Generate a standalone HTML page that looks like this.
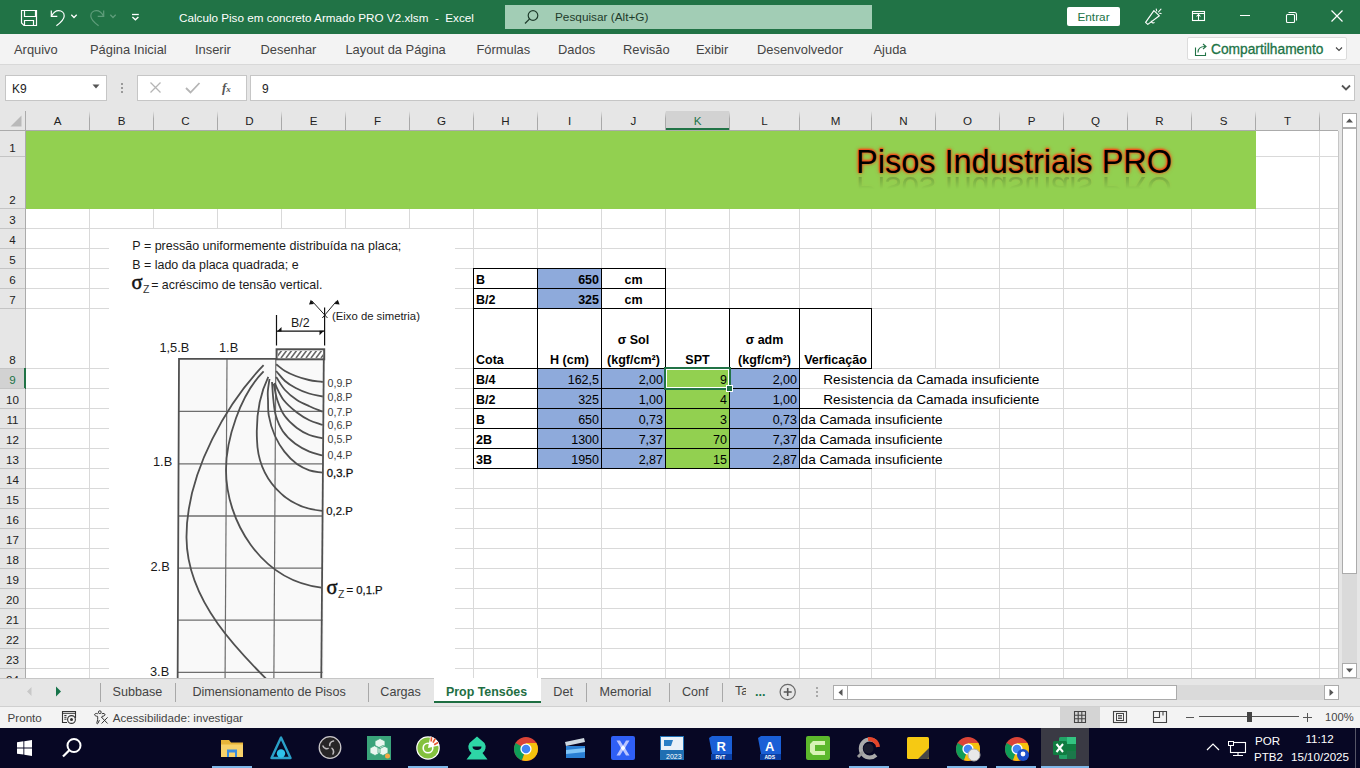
<!DOCTYPE html><html><head><meta charset="utf-8"><style>
html,body{margin:0;padding:0;width:1360px;height:768px;overflow:hidden;background:#fff;font-family:"Liberation Sans", sans-serif}
.r{position:absolute;display:block}
.t{position:absolute;white-space:pre;line-height:normal;font-family:"Liberation Sans", sans-serif}
</style></head><body>
<div class="r" style="left:0px;top:0px;width:1360px;height:34px;background:#217346;"></div>
<svg class="r" style="left:0px;top:0px;" width="150" height="34" viewBox="0 0 150 34"><path d="M21.5 10.5h15v15h-12.5l-2.5-2.5z" fill="none" stroke="#fff" stroke-width="1.2"/><path d="M24.5 10.5v6h11v-6" fill="none" stroke="#fff" stroke-width="1.2"/><path d="M24.5 25.5v-5h9v5" fill="none" stroke="#fff" stroke-width="1.2"/><path d="M51.3 10.6v5.8h6" fill="none" stroke="#fff" stroke-width="1.2"/><path d="M51.6 16c1.8-3.5 4.2-5.3 7-5.3 3.3 0 5.6 2.3 5.6 5.2 0 2.8-2.2 5.6-7.8 9.9" fill="none" stroke="#fff" stroke-width="1.2"/><path d="M71.3 14.8l2.7 2.7 2.7-2.7" fill="none" stroke="#fff" stroke-width="1.3"/><path d="M103.7 10.6v5.8h-6" fill="none" stroke="#5f9d7b" stroke-width="1.2"/><path d="M103.4 16c-1.8-3.5-4.2-5.3-7-5.3-3.3 0-5.6 2.3-5.6 5.2 0 2.8 2.2 5.6 7.8 9.9" fill="none" stroke="#5f9d7b" stroke-width="1.2"/><path d="M110.3 14.8l2.7 2.7 2.7-2.7" fill="none" stroke="#5f9d7b" stroke-width="1.3"/><path d="M132 14.5h6.8" stroke="#fff" stroke-width="1.3"/><path d="M132.4 17l3 2.8 3-2.8" fill="none" stroke="#fff" stroke-width="1.4"/></svg>
<div class="t" style="left:179px;top:11.41px;font-size:11.7px;color:#fff;font-weight:400;">Calculo Piso em concreto Armado PRO V2.xlsm&nbsp; -&nbsp; Excel</div>
<div class="r" style="left:505px;top:5px;width:367px;height:24px;background:#a2cdb5;"></div>
<svg class="r" style="left:522px;top:8px;" width="20" height="18" viewBox="0 0 20 18"><circle cx="11" cy="7.5" r="4.8" fill="none" stroke="#1e3b2b" stroke-width="1.2"/><path d="M7.6 10.9l-4.6 4.6" stroke="#1e3b2b" stroke-width="1.3"/></svg>
<div class="t" style="left:555px;top:10.32px;font-size:11.8px;color:#1e3b2b;font-weight:400;">Pesquisar (Alt+G)</div>
<div class="r" style="left:1067px;top:7px;width:53px;height:19px;background:#fff;border-radius:2px"></div>
<div class="t" style="left:1063.50px;width:60px;text-align:center;top:9.52px;font-size:11.8px;color:#217346;font-weight:400;">Entrar</div>
<svg class="r" style="left:1130px;top:0px;" width="90" height="34" viewBox="0 0 90 34"><path d="M1145.6 22.4L1153.9 10.6 1159.4 15.8 1147.8 24.4z" transform="translate(-1130 0)" fill="none" stroke="#fff" stroke-width="1.15" stroke-linejoin="round"/><path d="M1151.3 20.8a1.9 1.9 0 0 0 3.2 1.6" transform="translate(-1130 0)" fill="none" stroke="#fff" stroke-width="1.1"/><path d="M1156.2 9l.5 1.9M1161 9.1l-2.6 2.9M1159.6 13.3l1.5.3" transform="translate(-1130 0)" stroke="#fff" stroke-width="1.05" stroke-linecap="round"/><rect x="1192.5" y="11.5" width="12" height="9" transform="translate(-1130 0)" fill="none" stroke="#fff" stroke-width="1.1"/><path d="M1192.5 13.5h12M1198.5 14v6.5M1196.5 16.5l2-2 2 2" transform="translate(-1130 0)" fill="none" stroke="#fff" stroke-width="1.05"/></svg>
<div class="r" style="left:1240px;top:15px;width:10px;height:1px;background:#fff;"></div>
<svg class="r" style="left:1283px;top:9px;" width="16" height="16" viewBox="0 0 16 16"><rect x="3.5" y="5.5" width="8" height="8" rx="1" fill="none" stroke="#fff" stroke-width="1.1"/><path d="M5.5 3.5h6a2 2 0 0 1 2 2v6" fill="none" stroke="#fff" stroke-width="1.1"/></svg>
<svg class="r" style="left:1330px;top:9px;" width="14" height="14" viewBox="0 0 14 14"><path d="M1.5 1.5l11 11M12.5 1.5l-11 11" stroke="#fff" stroke-width="1.2"/></svg>
<div class="r" style="left:0px;top:34px;width:1360px;height:30px;background:#f3f3f3;"></div>
<div class="r" style="left:0px;top:64px;width:1360px;height:1px;background:#d8d8d8;"></div>
<div class="t" style="left:14px;top:42.33px;font-size:12.9px;color:#444;font-weight:400;">Arquivo</div>
<div class="t" style="left:90px;top:42.33px;font-size:12.9px;color:#444;font-weight:400;">Página Inicial</div>
<div class="t" style="left:195px;top:42.33px;font-size:12.9px;color:#444;font-weight:400;">Inserir</div>
<div class="t" style="left:260.5px;top:42.33px;font-size:12.9px;color:#444;font-weight:400;">Desenhar</div>
<div class="t" style="left:345.4px;top:42.33px;font-size:12.9px;color:#444;font-weight:400;">Layout da Página</div>
<div class="t" style="left:476.5px;top:42.33px;font-size:12.9px;color:#444;font-weight:400;">Fórmulas</div>
<div class="t" style="left:558px;top:42.33px;font-size:12.9px;color:#444;font-weight:400;">Dados</div>
<div class="t" style="left:623px;top:42.33px;font-size:12.9px;color:#444;font-weight:400;">Revisão</div>
<div class="t" style="left:696px;top:42.33px;font-size:12.9px;color:#444;font-weight:400;">Exibir</div>
<div class="t" style="left:757px;top:42.33px;font-size:12.9px;color:#444;font-weight:400;">Desenvolvedor</div>
<div class="t" style="left:873.5px;top:42.33px;font-size:12.9px;color:#444;font-weight:400;">Ajuda</div>
<div class="r" style="left:1187px;top:37px;width:160px;height:23px;background:#fff;box-sizing:border-box;border:1px solid #dcdcdc;border-radius:2px"></div>
<svg class="r" style="left:1193px;top:41px;" width="16" height="16" viewBox="0 0 16 16"><path d="M2.5 6.5v8h10v-3" fill="none" stroke="#217346" stroke-width="1.1"/><path d="M5 11.5c0-4 3-6 7-6" fill="none" stroke="#217346" stroke-width="1.1"/><path d="M10 3l3 2.5-3 2.5" fill="none" stroke="#217346" stroke-width="1.1"/></svg>
<div class="t" style="left:1211px;top:41.96px;font-size:13.75px;color:#217346;font-weight:400;-webkit-text-stroke:0.3px #217346">Compartilhamento</div>
<svg class="r" style="left:1334px;top:45px;" width="10" height="8" viewBox="0 0 10 8"><path d="M2 2.5l3 3 3-3" fill="none" stroke="#444" stroke-width="1.1"/></svg>
<div class="r" style="left:0px;top:65px;width:1360px;height:46px;background:#e6e6e6;"></div>
<div class="r" style="left:5px;top:75px;width:102px;height:26px;background:#fff;box-sizing:border-box;border:1px solid #c6c6c6"></div>
<div class="t" style="left:12px;top:81.54px;font-size:12px;color:#222;font-weight:400;">K9</div>
<svg class="r" style="left:91px;top:83px;" width="10" height="8" viewBox="0 0 10 8"><path d="M1.5 1.5h7l-3.5 4z" fill="#555"/></svg>
<div class="r" style="left:121px;top:83px;width:2px;height:2px;background:#9a9a9a;"></div>
<div class="r" style="left:121px;top:87px;width:2px;height:2px;background:#9a9a9a;"></div>
<div class="r" style="left:121px;top:91px;width:2px;height:2px;background:#9a9a9a;"></div>
<div class="r" style="left:137px;top:75px;width:110px;height:26px;background:#fff;box-sizing:border-box;border:1px solid #c6c6c6"></div>
<svg class="r" style="left:148px;top:81px;" width="16" height="14" viewBox="0 0 16 14"><path d="M2.5 1.5l10 10M12.5 1.5l-10 10" stroke="#b5b5b5" stroke-width="1.3"/></svg>
<svg class="r" style="left:184px;top:81px;" width="18" height="14" viewBox="0 0 18 14"><path d="M2 7l4.5 4.5 9-9.5" fill="none" stroke="#b5b5b5" stroke-width="1.8"/></svg>
<div class="t" style="left:222px;top:80.23px;font-size:13px;color:#555;font-weight:700;font-family:'Liberation Serif',serif"><i>f</i><span style='font-size:9px'><i>x</i></span></div>
<div class="r" style="left:250px;top:75px;width:1105px;height:26px;background:#fff;box-sizing:border-box;border:1px solid #c6c6c6"></div>
<div class="t" style="left:262px;top:81.54px;font-size:12px;color:#222;font-weight:400;">9</div>
<svg class="r" style="left:1340px;top:83px;" width="12" height="10" viewBox="0 0 12 10"><path d="M2 2.5l4 4 4-4" fill="none" stroke="#555" stroke-width="1.8"/></svg>
<div class="r" style="left:26px;top:131px;width:1313px;height:547px;background:#fff;"></div>
<div class="r" style="left:0px;top:111px;width:1339px;height:20px;background:#e6e6e6;"></div>
<div class="r" style="left:0px;top:130px;width:1339px;height:1px;background:#ababab;"></div>
<svg class="r" style="left:9px;top:114px;" width="14" height="14" viewBox="0 0 14 14"><path d="M12.5 1.5v11h-11z" fill="#b9b9b9"/></svg>
<svg class="r" style="left:0;top:0" width="1360" height="768"><rect x="89" y="131" width="1" height="547" fill="#d9d9d9"/><rect x="153" y="131" width="1" height="547" fill="#d9d9d9"/><rect x="217" y="131" width="1" height="547" fill="#d9d9d9"/><rect x="281" y="131" width="1" height="547" fill="#d9d9d9"/><rect x="345" y="131" width="1" height="547" fill="#d9d9d9"/><rect x="409" y="131" width="1" height="547" fill="#d9d9d9"/><rect x="473" y="131" width="1" height="547" fill="#d9d9d9"/><rect x="537" y="131" width="1" height="547" fill="#d9d9d9"/><rect x="601" y="131" width="1" height="547" fill="#d9d9d9"/><rect x="665" y="131" width="1" height="547" fill="#d9d9d9"/><rect x="729" y="131" width="1" height="547" fill="#d9d9d9"/><rect x="799" y="131" width="1" height="547" fill="#d9d9d9"/><rect x="871" y="131" width="1" height="547" fill="#d9d9d9"/><rect x="935" y="131" width="1" height="547" fill="#d9d9d9"/><rect x="999" y="131" width="1" height="547" fill="#d9d9d9"/><rect x="1063" y="131" width="1" height="547" fill="#d9d9d9"/><rect x="1127" y="131" width="1" height="547" fill="#d9d9d9"/><rect x="1191" y="131" width="1" height="547" fill="#d9d9d9"/><rect x="1255" y="131" width="1" height="547" fill="#d9d9d9"/><rect x="1319" y="131" width="1" height="547" fill="#d9d9d9"/><rect x="26" y="156" width="1313" height="1" fill="#d9d9d9"/><rect x="26" y="208" width="1313" height="1" fill="#d9d9d9"/><rect x="26" y="228" width="1313" height="1" fill="#d9d9d9"/><rect x="26" y="248" width="1313" height="1" fill="#d9d9d9"/><rect x="26" y="268" width="1313" height="1" fill="#d9d9d9"/><rect x="26" y="288" width="1313" height="1" fill="#d9d9d9"/><rect x="26" y="308" width="1313" height="1" fill="#d9d9d9"/><rect x="26" y="368" width="1313" height="1" fill="#d9d9d9"/><rect x="26" y="388" width="1313" height="1" fill="#d9d9d9"/><rect x="26" y="408" width="1313" height="1" fill="#d9d9d9"/><rect x="26" y="428" width="1313" height="1" fill="#d9d9d9"/><rect x="26" y="448" width="1313" height="1" fill="#d9d9d9"/><rect x="26" y="468" width="1313" height="1" fill="#d9d9d9"/><rect x="26" y="488" width="1313" height="1" fill="#d9d9d9"/><rect x="26" y="508" width="1313" height="1" fill="#d9d9d9"/><rect x="26" y="528" width="1313" height="1" fill="#d9d9d9"/><rect x="26" y="548" width="1313" height="1" fill="#d9d9d9"/><rect x="26" y="568" width="1313" height="1" fill="#d9d9d9"/><rect x="26" y="588" width="1313" height="1" fill="#d9d9d9"/><rect x="26" y="608" width="1313" height="1" fill="#d9d9d9"/><rect x="26" y="628" width="1313" height="1" fill="#d9d9d9"/><rect x="26" y="648" width="1313" height="1" fill="#d9d9d9"/><rect x="26" y="668" width="1313" height="1" fill="#d9d9d9"/></svg>
<div class="t" style="left:-142.50px;width:400px;text-align:center;top:114.10px;font-size:11.6px;color:#222;font-weight:400;">A</div>
<div class="t" style="left:-78.50px;width:400px;text-align:center;top:114.10px;font-size:11.6px;color:#222;font-weight:400;">B</div>
<div class="t" style="left:-14.50px;width:400px;text-align:center;top:114.10px;font-size:11.6px;color:#222;font-weight:400;">C</div>
<div class="t" style="left:49.50px;width:400px;text-align:center;top:114.10px;font-size:11.6px;color:#222;font-weight:400;">D</div>
<div class="t" style="left:113.50px;width:400px;text-align:center;top:114.10px;font-size:11.6px;color:#222;font-weight:400;">E</div>
<div class="t" style="left:177.50px;width:400px;text-align:center;top:114.10px;font-size:11.6px;color:#222;font-weight:400;">F</div>
<div class="t" style="left:241.50px;width:400px;text-align:center;top:114.10px;font-size:11.6px;color:#222;font-weight:400;">G</div>
<div class="t" style="left:305.50px;width:400px;text-align:center;top:114.10px;font-size:11.6px;color:#222;font-weight:400;">H</div>
<div class="t" style="left:369.50px;width:400px;text-align:center;top:114.10px;font-size:11.6px;color:#222;font-weight:400;">I</div>
<div class="t" style="left:433.50px;width:400px;text-align:center;top:114.10px;font-size:11.6px;color:#222;font-weight:400;">J</div>
<div class="r" style="left:666px;top:111px;width:63px;height:19px;background:#d2d2d2;"></div>
<div class="r" style="left:665px;top:128px;width:65px;height:2px;background:#217346;"></div>
<div class="t" style="left:497.50px;width:400px;text-align:center;top:114.10px;font-size:11.6px;color:#217346;font-weight:400;">K</div>
<div class="t" style="left:564.50px;width:400px;text-align:center;top:114.10px;font-size:11.6px;color:#222;font-weight:400;">L</div>
<div class="t" style="left:635.50px;width:400px;text-align:center;top:114.10px;font-size:11.6px;color:#222;font-weight:400;">M</div>
<div class="t" style="left:703.50px;width:400px;text-align:center;top:114.10px;font-size:11.6px;color:#222;font-weight:400;">N</div>
<div class="t" style="left:767.50px;width:400px;text-align:center;top:114.10px;font-size:11.6px;color:#222;font-weight:400;">O</div>
<div class="t" style="left:831.50px;width:400px;text-align:center;top:114.10px;font-size:11.6px;color:#222;font-weight:400;">P</div>
<div class="t" style="left:895.50px;width:400px;text-align:center;top:114.10px;font-size:11.6px;color:#222;font-weight:400;">Q</div>
<div class="t" style="left:959.50px;width:400px;text-align:center;top:114.10px;font-size:11.6px;color:#222;font-weight:400;">R</div>
<div class="t" style="left:1023.50px;width:400px;text-align:center;top:114.10px;font-size:11.6px;color:#222;font-weight:400;">S</div>
<div class="t" style="left:1087.50px;width:400px;text-align:center;top:114.10px;font-size:11.6px;color:#222;font-weight:400;">T</div>
<div class="r" style="left:25px;top:111px;width:1px;height:19px;background:linear-gradient(#e6e6e6,#a9a9a9 40%,#a9a9a9)"></div>
<div class="r" style="left:89px;top:111px;width:1px;height:19px;background:linear-gradient(#e6e6e6,#a9a9a9 40%,#a9a9a9)"></div>
<div class="r" style="left:153px;top:111px;width:1px;height:19px;background:linear-gradient(#e6e6e6,#a9a9a9 40%,#a9a9a9)"></div>
<div class="r" style="left:217px;top:111px;width:1px;height:19px;background:linear-gradient(#e6e6e6,#a9a9a9 40%,#a9a9a9)"></div>
<div class="r" style="left:281px;top:111px;width:1px;height:19px;background:linear-gradient(#e6e6e6,#a9a9a9 40%,#a9a9a9)"></div>
<div class="r" style="left:345px;top:111px;width:1px;height:19px;background:linear-gradient(#e6e6e6,#a9a9a9 40%,#a9a9a9)"></div>
<div class="r" style="left:409px;top:111px;width:1px;height:19px;background:linear-gradient(#e6e6e6,#a9a9a9 40%,#a9a9a9)"></div>
<div class="r" style="left:473px;top:111px;width:1px;height:19px;background:linear-gradient(#e6e6e6,#a9a9a9 40%,#a9a9a9)"></div>
<div class="r" style="left:537px;top:111px;width:1px;height:19px;background:linear-gradient(#e6e6e6,#a9a9a9 40%,#a9a9a9)"></div>
<div class="r" style="left:601px;top:111px;width:1px;height:19px;background:linear-gradient(#e6e6e6,#a9a9a9 40%,#a9a9a9)"></div>
<div class="r" style="left:665px;top:111px;width:1px;height:19px;background:linear-gradient(#e6e6e6,#a9a9a9 40%,#a9a9a9)"></div>
<div class="r" style="left:729px;top:111px;width:1px;height:19px;background:linear-gradient(#e6e6e6,#a9a9a9 40%,#a9a9a9)"></div>
<div class="r" style="left:799px;top:111px;width:1px;height:19px;background:linear-gradient(#e6e6e6,#a9a9a9 40%,#a9a9a9)"></div>
<div class="r" style="left:871px;top:111px;width:1px;height:19px;background:linear-gradient(#e6e6e6,#a9a9a9 40%,#a9a9a9)"></div>
<div class="r" style="left:935px;top:111px;width:1px;height:19px;background:linear-gradient(#e6e6e6,#a9a9a9 40%,#a9a9a9)"></div>
<div class="r" style="left:999px;top:111px;width:1px;height:19px;background:linear-gradient(#e6e6e6,#a9a9a9 40%,#a9a9a9)"></div>
<div class="r" style="left:1063px;top:111px;width:1px;height:19px;background:linear-gradient(#e6e6e6,#a9a9a9 40%,#a9a9a9)"></div>
<div class="r" style="left:1127px;top:111px;width:1px;height:19px;background:linear-gradient(#e6e6e6,#a9a9a9 40%,#a9a9a9)"></div>
<div class="r" style="left:1191px;top:111px;width:1px;height:19px;background:linear-gradient(#e6e6e6,#a9a9a9 40%,#a9a9a9)"></div>
<div class="r" style="left:1255px;top:111px;width:1px;height:19px;background:linear-gradient(#e6e6e6,#a9a9a9 40%,#a9a9a9)"></div>
<div class="r" style="left:1319px;top:111px;width:1px;height:19px;background:linear-gradient(#e6e6e6,#a9a9a9 40%,#a9a9a9)"></div>
<div class="r" style="left:1319px;top:111px;width:1px;height:19px;background:linear-gradient(#e6e6e6,#a9a9a9 40%,#a9a9a9)"></div>
<div class="r" style="left:0px;top:131px;width:25px;height:547px;background:#e6e6e6;"></div>
<div class="r" style="left:25px;top:111px;width:1px;height:567px;background:#ababab;"></div>
<div class="t" style="left:0.00px;width:25px;text-align:center;top:141.00px;font-size:11.6px;color:#222;font-weight:400;">1</div>
<div class="r" style="left:0px;top:156px;width:25px;height:1px;background:#c4c4c4;"></div>
<div class="t" style="left:0.00px;width:25px;text-align:center;top:193.00px;font-size:11.6px;color:#222;font-weight:400;">2</div>
<div class="r" style="left:0px;top:208px;width:25px;height:1px;background:#c4c4c4;"></div>
<div class="t" style="left:0.00px;width:25px;text-align:center;top:213.00px;font-size:11.6px;color:#222;font-weight:400;">3</div>
<div class="r" style="left:0px;top:228px;width:25px;height:1px;background:#c4c4c4;"></div>
<div class="t" style="left:0.00px;width:25px;text-align:center;top:233.00px;font-size:11.6px;color:#222;font-weight:400;">4</div>
<div class="r" style="left:0px;top:248px;width:25px;height:1px;background:#c4c4c4;"></div>
<div class="t" style="left:0.00px;width:25px;text-align:center;top:253.00px;font-size:11.6px;color:#222;font-weight:400;">5</div>
<div class="r" style="left:0px;top:268px;width:25px;height:1px;background:#c4c4c4;"></div>
<div class="t" style="left:0.00px;width:25px;text-align:center;top:273.00px;font-size:11.6px;color:#222;font-weight:400;">6</div>
<div class="r" style="left:0px;top:288px;width:25px;height:1px;background:#c4c4c4;"></div>
<div class="t" style="left:0.00px;width:25px;text-align:center;top:293.00px;font-size:11.6px;color:#222;font-weight:400;">7</div>
<div class="r" style="left:0px;top:308px;width:25px;height:1px;background:#c4c4c4;"></div>
<div class="t" style="left:0.00px;width:25px;text-align:center;top:353.00px;font-size:11.6px;color:#222;font-weight:400;">8</div>
<div class="r" style="left:0px;top:368px;width:25px;height:1px;background:#c4c4c4;"></div>
<div class="r" style="left:0px;top:369px;width:25px;height:19px;background:#d2d2d2;"></div>
<div class="r" style="left:24px;top:368px;width:2px;height:21px;background:#217346;"></div>
<div class="t" style="left:0.00px;width:25px;text-align:center;top:373.00px;font-size:11.6px;color:#217346;font-weight:400;">9</div>
<div class="r" style="left:0px;top:388px;width:25px;height:1px;background:#c4c4c4;"></div>
<div class="t" style="left:0.00px;width:25px;text-align:center;top:393.00px;font-size:11.6px;color:#222;font-weight:400;">10</div>
<div class="r" style="left:0px;top:408px;width:25px;height:1px;background:#c4c4c4;"></div>
<div class="t" style="left:0.00px;width:25px;text-align:center;top:413.00px;font-size:11.6px;color:#222;font-weight:400;">11</div>
<div class="r" style="left:0px;top:428px;width:25px;height:1px;background:#c4c4c4;"></div>
<div class="t" style="left:0.00px;width:25px;text-align:center;top:433.00px;font-size:11.6px;color:#222;font-weight:400;">12</div>
<div class="r" style="left:0px;top:448px;width:25px;height:1px;background:#c4c4c4;"></div>
<div class="t" style="left:0.00px;width:25px;text-align:center;top:453.00px;font-size:11.6px;color:#222;font-weight:400;">13</div>
<div class="r" style="left:0px;top:468px;width:25px;height:1px;background:#c4c4c4;"></div>
<div class="t" style="left:0.00px;width:25px;text-align:center;top:473.00px;font-size:11.6px;color:#222;font-weight:400;">14</div>
<div class="r" style="left:0px;top:488px;width:25px;height:1px;background:#c4c4c4;"></div>
<div class="t" style="left:0.00px;width:25px;text-align:center;top:493.00px;font-size:11.6px;color:#222;font-weight:400;">15</div>
<div class="r" style="left:0px;top:508px;width:25px;height:1px;background:#c4c4c4;"></div>
<div class="t" style="left:0.00px;width:25px;text-align:center;top:513.00px;font-size:11.6px;color:#222;font-weight:400;">16</div>
<div class="r" style="left:0px;top:528px;width:25px;height:1px;background:#c4c4c4;"></div>
<div class="t" style="left:0.00px;width:25px;text-align:center;top:533.00px;font-size:11.6px;color:#222;font-weight:400;">17</div>
<div class="r" style="left:0px;top:548px;width:25px;height:1px;background:#c4c4c4;"></div>
<div class="t" style="left:0.00px;width:25px;text-align:center;top:553.00px;font-size:11.6px;color:#222;font-weight:400;">18</div>
<div class="r" style="left:0px;top:568px;width:25px;height:1px;background:#c4c4c4;"></div>
<div class="t" style="left:0.00px;width:25px;text-align:center;top:573.00px;font-size:11.6px;color:#222;font-weight:400;">19</div>
<div class="r" style="left:0px;top:588px;width:25px;height:1px;background:#c4c4c4;"></div>
<div class="t" style="left:0.00px;width:25px;text-align:center;top:593.00px;font-size:11.6px;color:#222;font-weight:400;">20</div>
<div class="r" style="left:0px;top:608px;width:25px;height:1px;background:#c4c4c4;"></div>
<div class="t" style="left:0.00px;width:25px;text-align:center;top:613.00px;font-size:11.6px;color:#222;font-weight:400;">21</div>
<div class="r" style="left:0px;top:628px;width:25px;height:1px;background:#c4c4c4;"></div>
<div class="t" style="left:0.00px;width:25px;text-align:center;top:633.00px;font-size:11.6px;color:#222;font-weight:400;">22</div>
<div class="r" style="left:0px;top:648px;width:25px;height:1px;background:#c4c4c4;"></div>
<div class="t" style="left:0.00px;width:25px;text-align:center;top:653.00px;font-size:11.6px;color:#222;font-weight:400;">23</div>
<div class="r" style="left:0px;top:668px;width:25px;height:1px;background:#c4c4c4;"></div>
<div class="t" style="left:0.00px;width:25px;text-align:center;top:673.00px;font-size:11.6px;color:#222;font-weight:400;">24</div>
<div class="r" style="left:26px;top:131px;width:1230px;height:78px;background:#92d050;"></div>
<div class="t" style="left:856px;top:144.19px;font-size:32.5px;color:#000;text-shadow:0 -1px 1px #f0521c,0 0 2px #f0521c,0 -1px 3px #f0521c,0 0 4px rgba(240,82,28,.7)">Pisos Industriais PRO</div>
<div class="r" style="left:846px;top:175px;width:340px;height:14px;overflow:hidden;opacity:.22;-webkit-mask-image:linear-gradient(#000,rgba(0,0,0,0))"><div class="t" style="left:10px;top:-28.41px;font-size:32.5px;color:#000;transform:scaleY(-1);transform-origin:0 29.41px;text-shadow:0 0 3px #f0521c">Pisos Industriais PRO</div></div>
<div class="r" style="left:538px;top:269px;width:63px;height:39px;background:#8eaadb;"></div>
<div class="r" style="left:538px;top:369px;width:63px;height:99px;background:#8eaadb;"></div>
<div class="r" style="left:602px;top:369px;width:63px;height:99px;background:#8eaadb;"></div>
<div class="r" style="left:666px;top:369px;width:63px;height:99px;background:#92d050;"></div>
<div class="r" style="left:730px;top:369px;width:69px;height:99px;background:#8eaadb;"></div>
<div class="r" style="left:800px;top:369px;width:263px;height:39px;background:#fff;"></div>
<div class="r" style="left:800px;top:388px;width:263px;height:1px;background:#d9d9d9"></div>
<div class="r" style="left:800px;top:409px;width:136px;height:59px;background:#fff;"></div>
<div class="r" style="left:800px;top:428px;width:135px;height:1px;background:#d9d9d9"></div>
<div class="r" style="left:800px;top:448px;width:135px;height:1px;background:#d9d9d9"></div>
<div class="r" style="left:473px;top:268px;width:193px;height:1px;background:#000;"></div>
<div class="r" style="left:473px;top:288px;width:193px;height:1px;background:#000;"></div>
<div class="r" style="left:473px;top:308px;width:193px;height:1px;background:#000;"></div>
<div class="r" style="left:473px;top:268px;width:1px;height:41px;background:#000;"></div>
<div class="r" style="left:537px;top:268px;width:1px;height:41px;background:#000;"></div>
<div class="r" style="left:601px;top:268px;width:1px;height:41px;background:#000;"></div>
<div class="r" style="left:665px;top:268px;width:1px;height:41px;background:#000;"></div>
<div class="r" style="left:473px;top:308px;width:399px;height:1px;background:#000;"></div>
<div class="r" style="left:473px;top:368px;width:399px;height:1px;background:#000;"></div>
<div class="r" style="left:473px;top:308px;width:1px;height:61px;background:#000;"></div>
<div class="r" style="left:537px;top:308px;width:1px;height:61px;background:#000;"></div>
<div class="r" style="left:601px;top:308px;width:1px;height:61px;background:#000;"></div>
<div class="r" style="left:665px;top:308px;width:1px;height:61px;background:#000;"></div>
<div class="r" style="left:729px;top:308px;width:1px;height:61px;background:#000;"></div>
<div class="r" style="left:799px;top:308px;width:1px;height:61px;background:#000;"></div>
<div class="r" style="left:871px;top:308px;width:1px;height:61px;background:#000;"></div>
<div class="r" style="left:473px;top:388px;width:327px;height:1px;background:#000;"></div>
<div class="r" style="left:473px;top:408px;width:399px;height:1px;background:#000;"></div>
<div class="r" style="left:473px;top:428px;width:399px;height:1px;background:#000;"></div>
<div class="r" style="left:473px;top:448px;width:399px;height:1px;background:#000;"></div>
<div class="r" style="left:473px;top:468px;width:399px;height:1px;background:#000;"></div>
<div class="r" style="left:473px;top:368px;width:1px;height:101px;background:#000;"></div>
<div class="r" style="left:537px;top:368px;width:1px;height:101px;background:#000;"></div>
<div class="r" style="left:601px;top:368px;width:1px;height:101px;background:#000;"></div>
<div class="r" style="left:665px;top:368px;width:1px;height:101px;background:#000;"></div>
<div class="r" style="left:729px;top:368px;width:1px;height:101px;background:#000;"></div>
<div class="r" style="left:799px;top:368px;width:1px;height:101px;background:#000;"></div>
<div class="t" style="left:476px;top:272.69px;font-size:12.5px;color:#000;font-weight:700;">B</div>
<div class="t" style="left:399.00px;width:200px;text-align:right;top:272.69px;font-size:12.5px;color:#000;font-weight:700;">650</div>
<div class="t" style="left:533.50px;width:200px;text-align:center;top:272.69px;font-size:12.5px;color:#000;font-weight:700;">cm</div>
<div class="t" style="left:476px;top:292.69px;font-size:12.5px;color:#000;font-weight:700;">B/2</div>
<div class="t" style="left:399.00px;width:200px;text-align:right;top:292.69px;font-size:12.5px;color:#000;font-weight:700;">325</div>
<div class="t" style="left:533.50px;width:200px;text-align:center;top:292.69px;font-size:12.5px;color:#000;font-weight:700;">cm</div>
<div class="t" style="left:476px;top:352.69px;font-size:12.5px;color:#000;font-weight:700;">Cota</div>
<div class="t" style="left:469.50px;width:200px;text-align:center;top:352.69px;font-size:12.5px;color:#000;font-weight:700;">H (cm)</div>
<div class="t" style="left:533.50px;width:200px;text-align:center;top:332.69px;font-size:12.5px;color:#000;font-weight:700;">σ Sol</div>
<div class="t" style="left:533.50px;width:200px;text-align:center;top:352.69px;font-size:12.5px;color:#000;font-weight:700;">(kgf/cm²)</div>
<div class="t" style="left:597.50px;width:200px;text-align:center;top:352.69px;font-size:12.5px;color:#000;font-weight:700;">SPT</div>
<div class="t" style="left:664.50px;width:200px;text-align:center;top:332.69px;font-size:12.5px;color:#000;font-weight:700;">σ adm</div>
<div class="t" style="left:664.50px;width:200px;text-align:center;top:352.69px;font-size:12.5px;color:#000;font-weight:700;">(kgf/cm²)</div>
<div class="t" style="left:735.50px;width:200px;text-align:center;top:352.69px;font-size:12.5px;color:#000;font-weight:700;">Verficação</div>
<div class="t" style="left:476px;top:372.69px;font-size:12.5px;color:#000;font-weight:700;">B/4</div>
<div class="t" style="left:399.00px;width:200px;text-align:right;top:372.69px;font-size:12.5px;color:#000;font-weight:400;">162,5</div>
<div class="t" style="left:463.00px;width:200px;text-align:right;top:372.69px;font-size:12.5px;color:#000;font-weight:400;">2,00</div>
<div class="t" style="left:527.00px;width:200px;text-align:right;top:372.69px;font-size:12.5px;color:#000;font-weight:400;">9</div>
<div class="t" style="left:597.00px;width:200px;text-align:right;top:372.69px;font-size:12.5px;color:#000;font-weight:400;">2,00</div>
<div class="t" style="left:476px;top:392.69px;font-size:12.5px;color:#000;font-weight:700;">B/2</div>
<div class="t" style="left:399.00px;width:200px;text-align:right;top:392.69px;font-size:12.5px;color:#000;font-weight:400;">325</div>
<div class="t" style="left:463.00px;width:200px;text-align:right;top:392.69px;font-size:12.5px;color:#000;font-weight:400;">1,00</div>
<div class="t" style="left:527.00px;width:200px;text-align:right;top:392.69px;font-size:12.5px;color:#000;font-weight:400;">4</div>
<div class="t" style="left:597.00px;width:200px;text-align:right;top:392.69px;font-size:12.5px;color:#000;font-weight:400;">1,00</div>
<div class="t" style="left:476px;top:412.69px;font-size:12.5px;color:#000;font-weight:700;">B</div>
<div class="t" style="left:399.00px;width:200px;text-align:right;top:412.69px;font-size:12.5px;color:#000;font-weight:400;">650</div>
<div class="t" style="left:463.00px;width:200px;text-align:right;top:412.69px;font-size:12.5px;color:#000;font-weight:400;">0,73</div>
<div class="t" style="left:527.00px;width:200px;text-align:right;top:412.69px;font-size:12.5px;color:#000;font-weight:400;">3</div>
<div class="t" style="left:597.00px;width:200px;text-align:right;top:412.69px;font-size:12.5px;color:#000;font-weight:400;">0,73</div>
<div class="t" style="left:476px;top:432.69px;font-size:12.5px;color:#000;font-weight:700;">2B</div>
<div class="t" style="left:399.00px;width:200px;text-align:right;top:432.69px;font-size:12.5px;color:#000;font-weight:400;">1300</div>
<div class="t" style="left:463.00px;width:200px;text-align:right;top:432.69px;font-size:12.5px;color:#000;font-weight:400;">7,37</div>
<div class="t" style="left:527.00px;width:200px;text-align:right;top:432.69px;font-size:12.5px;color:#000;font-weight:400;">70</div>
<div class="t" style="left:597.00px;width:200px;text-align:right;top:432.69px;font-size:12.5px;color:#000;font-weight:400;">7,37</div>
<div class="t" style="left:476px;top:452.69px;font-size:12.5px;color:#000;font-weight:700;">3B</div>
<div class="t" style="left:399.00px;width:200px;text-align:right;top:452.69px;font-size:12.5px;color:#000;font-weight:400;">1950</div>
<div class="t" style="left:463.00px;width:200px;text-align:right;top:452.69px;font-size:12.5px;color:#000;font-weight:400;">2,87</div>
<div class="t" style="left:527.00px;width:200px;text-align:right;top:452.69px;font-size:12.5px;color:#000;font-weight:400;">15</div>
<div class="t" style="left:597.00px;width:200px;text-align:right;top:452.69px;font-size:12.5px;color:#000;font-weight:400;">2,87</div>
<div class="t" style="left:823.3px;top:371.69px;font-size:13.6px;color:#000;font-weight:400;">Resistencia da Camada insuficiente</div>
<div class="t" style="left:823.3px;top:391.69px;font-size:13.6px;color:#000;font-weight:400;">Resistencia da Camada insuficiente</div>
<div class="t" style="left:800px;top:411.69px;width:200px;height:20px;overflow:hidden;font-size:13.6px"><span style="position:absolute;left:0.6px">da Camada insuficiente</span></div>
<div class="t" style="left:800px;top:431.69px;width:200px;height:20px;overflow:hidden;font-size:13.6px"><span style="position:absolute;left:0.6px">da Camada insuficiente</span></div>
<div class="t" style="left:800px;top:451.69px;width:200px;height:20px;overflow:hidden;font-size:13.6px"><span style="position:absolute;left:0.6px">da Camada insuficiente</span></div>
<div class="r" style="left:664px;top:367px;width:67px;height:23px;box-sizing:border-box;border:2px solid #217346"></div>
<div class="r" style="left:666px;top:369px;width:63px;height:19px;box-sizing:border-box;border:1px solid #fff"></div>
<div class="r" style="left:726px;top:385px;width:7px;height:7px;background:#fff;"></div>
<div class="r" style="left:727px;top:386px;width:5px;height:5px;background:#217346;"></div>
<div class="r" style="left:109px;top:229px;width:346px;height:449px;background:#fff;"></div>
<svg class="r" style="left:109px;top:229px" width="346" height="449" viewBox="109 229 346 449"><rect x="179" y="359" width="145" height="330" fill="#f9f9f9"/><line x1="227" y1="359" x2="225" y2="690" stroke="#6e6e6e" stroke-width="1.2"/><line x1="275.8" y1="359" x2="273.8" y2="690" stroke="#6e6e6e" stroke-width="1.2"/><line x1="178" y1="411.3" x2="322.5" y2="411.3" stroke="#6e6e6e" stroke-width="1.3"/><line x1="178" y1="463.8" x2="322.5" y2="463.8" stroke="#6e6e6e" stroke-width="1.3"/><line x1="178" y1="516" x2="322.5" y2="516" stroke="#6e6e6e" stroke-width="1.3"/><line x1="178" y1="568.2" x2="322.5" y2="568.2" stroke="#6e6e6e" stroke-width="1.3"/><line x1="178" y1="620.2" x2="322.5" y2="620.2" stroke="#6e6e6e" stroke-width="1.3"/><line x1="178" y1="672.4" x2="322.5" y2="672.4" stroke="#6e6e6e" stroke-width="1.3"/><path d="M177.6 690L179 358.8H276" fill="none" stroke="#505050" stroke-width="1.8"/><line x1="323.8" y1="358" x2="321.2" y2="690" stroke="#505050" stroke-width="1.8"/><rect x="276.6" y="349.3" width="47.6" height="10" fill="#fff" stroke="#505050" stroke-width="2"/><clipPath id="pc"><rect x="278" y="351" width="45" height="7"/></clipPath><path d="M276 358 l6 -8M281 358 l6 -8M286 358 l6 -8M291 358 l6 -8M296 358 l6 -8M301 358 l6 -8M306 358 l6 -8M311 358 l6 -8M316 358 l6 -8M321 358 l6 -8" stroke="#6a6a6a" stroke-width="1.6" clip-path="url(#pc)"/><path d="M276.5 315V345.5M324.6 307.5V345.5M277 331.1H324" stroke="#111" stroke-width="1.2" fill="none"/><path d="M277 331.5l4.5-4.5v4.5z M324 330.8l-4.5 4.5v-4.5z" fill="#111"/><path d="M311.8 300.8L327.5 318M336.8 300.8L322.3 318" stroke="#222" stroke-width="1" fill="none"/><path d="M310.8 299.8l3.2 4.2 -5 .6z M337.8 299.8l-3.2 4.2 5 .6z" fill="#111"/><path d="M276.2 364.3 C279.1 366.5 281.8 369.1 285.0 371.0 C288.3 373.0 291.9 374.5 295.7 376.0 C299.8 377.6 304.5 379.0 309.0 380.0 C313.5 381.0 318.2 381.3 322.8 382.0" fill="none" stroke="#505050" stroke-width="1.8"/><path d="M276.2 371.0 C279.1 374.3 281.7 378.1 285.0 381.0 C288.2 383.8 291.8 386.0 295.7 388.0 C299.8 390.2 304.5 392.1 309.0 393.5 C313.5 394.9 318.2 395.5 322.8 396.5" fill="none" stroke="#505050" stroke-width="1.8"/><path d="M276.2 377.0 C279.1 381.3 281.5 386.2 285.0 390.0 C288.4 393.8 292.7 397.2 296.9 400.0 C300.9 402.6 305.1 404.3 309.4 406.2 C313.7 408.2 318.3 409.9 322.7 411.7" fill="none" stroke="#505050" stroke-width="1.8"/><path d="M274.5 383.0 C277.5 388.7 279.8 395.0 283.6 400.0 C287.3 404.8 292.4 409.0 296.9 412.5 C301.0 415.6 305.0 418.2 309.4 420.3 C313.7 422.4 318.3 423.4 322.7 425.0" fill="none" stroke="#505050" stroke-width="1.8"/><path d="M273.7 383.8 C274.9 389.2 275.5 394.7 277.3 400.0 C279.1 405.3 281.2 411.0 284.4 415.6 C287.7 420.3 292.5 424.7 296.9 428.0 C300.9 431.0 305.0 433.3 309.4 435.0 C313.7 436.7 318.3 437.2 322.7 438.3" fill="none" stroke="#505050" stroke-width="1.8"/><path d="M272.0 382.0 C272.5 388.0 272.7 394.2 273.4 400.0 C274.0 405.4 274.3 410.5 275.8 415.6 C277.4 420.9 279.6 426.6 282.8 431.2 C286.1 436.0 290.7 440.3 295.3 443.8 C299.6 447.0 304.7 449.6 309.4 451.6 C313.8 453.4 318.3 454.2 322.7 455.5" fill="none" stroke="#505050" stroke-width="1.8"/><path d="M269.5 379.0 C268.9 383.3 268.0 388.2 267.8 392.0 C267.6 395.0 267.9 396.9 268.0 400.0 C268.2 404.3 267.8 410.1 268.8 415.6 C269.9 422.0 272.2 429.8 275.0 436.0 C277.6 441.7 280.7 446.9 284.4 451.6 C288.0 456.2 292.5 460.8 296.9 464.0 C300.9 466.8 305.1 468.8 309.4 470.3 C313.7 471.7 318.3 471.9 322.7 472.7" fill="none" stroke="#505050" stroke-width="1.8"/><path d="M268.3 376.9 C258 398 256 420 257 440 C258 478 285 508 322 510.8" fill="none" stroke="#505050" stroke-width="1.8"/><path d="M263.6 371.4 C240 395 226 440 226 470 C226 520 260 580 321.3 587.6" fill="none" stroke="#505050" stroke-width="1.8"/><path d="M263.6 365.2 C230 400 186 470 186.5 538 C187 600 235 650 290 702" fill="none" stroke="#505050" stroke-width="1.8"/><text x="132.3" y="250" font-family="Liberation Sans" font-size="12.5" fill="#1a1a1a" >P = pressão uniformemente distribuída na placa;</text><text x="132.3" y="269" font-family="Liberation Sans" font-size="12.45" fill="#1a1a1a" >B = lado da placa quadrada; e</text><text x="131.6" y="288.8" font-family="Liberation Serif" font-size="20.5" fill="#111"  stroke="#111" stroke-width="0.5">σ</text><text x="143" y="292.5" font-family="Liberation Sans" font-size="10.5" fill="#333" >Z</text><text x="151.2" y="288.6" font-family="Liberation Sans" font-size="12.4" fill="#1a1a1a" >= acréscimo de tensão vertical.</text><text x="291" y="326.7" font-family="Liberation Sans" font-size="12.4" fill="#1a1a1a" >B/2</text><text x="332" y="319.5" font-family="Liberation Sans" font-size="11.3" fill="#1a1a1a" >(Eixo de simetria)</text><text x="159.4" y="352.3" font-family="Liberation Sans" font-size="12.8" fill="#1a1a1a" >1,5.B</text><text x="219" y="352.3" font-family="Liberation Sans" font-size="12.8" fill="#1a1a1a" >1.B</text><text x="153" y="466" font-family="Liberation Sans" font-size="12.8" fill="#1a1a1a" >1.B</text><text x="150.5" y="571" font-family="Liberation Sans" font-size="12.8" fill="#1a1a1a" >2.B</text><text x="150" y="675.5" font-family="Liberation Sans" font-size="12.8" fill="#1a1a1a" >3.B</text><text x="327.6" y="386.5" font-family="Liberation Sans" font-size="10.6" fill="#3a3a3a" >0,9.P</text><text x="327.6" y="401.3" font-family="Liberation Sans" font-size="10.6" fill="#3a3a3a" >0,8.P</text><text x="327.6" y="415.6" font-family="Liberation Sans" font-size="10.6" fill="#3a3a3a" >0,7.P</text><text x="327.6" y="429" font-family="Liberation Sans" font-size="10.6" fill="#3a3a3a" >0,6.P</text><text x="327.6" y="443.4" font-family="Liberation Sans" font-size="10.6" fill="#3a3a3a" >0,5.P</text><text x="327.6" y="459.4" font-family="Liberation Sans" font-size="10.6" fill="#3a3a3a" >0,4.P</text><text x="326.8" y="476.7" font-family="Liberation Sans" font-size="11.3" fill="#111" stroke="#111" stroke-width="0.3">0,3.P</text><text x="326.3" y="514.6" font-family="Liberation Sans" font-size="11.3" fill="#111" stroke="#111" stroke-width="0.2">0,2.P</text><text x="326.4" y="593.6" font-family="Liberation Serif" font-size="20.5" fill="#111"  stroke="#111" stroke-width="0.5">σ</text><text x="338" y="597.5" font-family="Liberation Sans" font-size="10.5" fill="#333" >Z</text><text x="346.5" y="593.7" font-family="Liberation Sans" font-size="11.3" fill="#111" stroke="#111" stroke-width="0.25">= 0,1.P</text></svg>
<div class="r" style="left:1338px;top:111px;width:22px;height:567px;background:#e6e6e6;"></div>
<div class="r" style="left:1338px;top:131px;width:1px;height:547px;background:#c6c6c6;"></div>
<div class="r" style="left:1342px;top:113px;width:15px;height:15px;background:#fff;box-sizing:border-box;border:1px solid #ababab"></div>
<svg class="r" style="left:1342px;top:113px;" width="15" height="15" viewBox="0 0 15 15"><path d="M4 9.5h7l-3.5-4z" fill="#555"/></svg>
<div class="r" style="left:1342px;top:128px;width:15px;height:446px;background:#fff;box-sizing:border-box;border:1px solid #ababab"></div>
<div class="r" style="left:1342px;top:574px;width:15px;height:89px;background:#dadada;"></div>
<div class="r" style="left:1342px;top:663px;width:15px;height:15px;background:#fff;box-sizing:border-box;border:1px solid #ababab"></div>
<svg class="r" style="left:1342px;top:663px;" width="15" height="15" viewBox="0 0 15 15"><path d="M4 5.5h7l-3.5 4z" fill="#555"/></svg>
<div class="r" style="left:0px;top:678px;width:1360px;height:28px;background:#e6e6e6;"></div>
<div class="r" style="left:0px;top:678px;width:434px;height:1px;background:#c6c6c6;"></div>
<div class="r" style="left:541px;top:678px;width:819px;height:1px;background:#c6c6c6;"></div>
<div class="r" style="left:0px;top:706px;width:1360px;height:1px;background:#d0d0d0;"></div>
<svg class="r" style="left:24px;top:683px;" width="12" height="16" viewBox="0 0 12 16"><path d="M7.5 4l-4.5 4.5 4.5 4.5z" fill="#c8c8c8"/></svg>
<svg class="r" style="left:53px;top:683px;" width="12" height="16" viewBox="0 0 12 16"><path d="M3 3.5l5 5-5 5z" fill="#17744a"/></svg>
<div class="r" style="left:100px;top:683px;width:1px;height:19px;background:#a8a8a8;"></div>
<div class="r" style="left:175px;top:683px;width:1px;height:19px;background:#a8a8a8;"></div>
<div class="r" style="left:368px;top:683px;width:1px;height:19px;background:#a8a8a8;"></div>
<div class="r" style="left:586px;top:683px;width:1px;height:19px;background:#a8a8a8;"></div>
<div class="r" style="left:669px;top:683px;width:1px;height:19px;background:#a8a8a8;"></div>
<div class="r" style="left:722px;top:683px;width:1px;height:19px;background:#a8a8a8;"></div>
<div class="t" style="left:112.6px;top:684.60px;font-size:12.6px;color:#444;font-weight:400;">Subbase</div>
<div class="t" style="left:192.4px;top:684.60px;font-size:12.6px;color:#444;font-weight:400;">Dimensionamento de Pisos</div>
<div class="t" style="left:380.3px;top:684.60px;font-size:12.6px;color:#444;font-weight:400;">Cargas</div>
<div class="t" style="left:553.3px;top:684.60px;font-size:12.6px;color:#444;font-weight:400;">Det</div>
<div class="t" style="left:599.6px;top:684.60px;font-size:12.6px;color:#444;font-weight:400;">Memorial</div>
<div class="t" style="left:682px;top:684.60px;font-size:12.6px;color:#444;font-weight:400;">Conf</div>
<div class="r" style="left:434px;top:678px;width:107px;height:23px;background:#fff;"></div>
<div class="r" style="left:434px;top:701px;width:107px;height:2px;background:#1e6e42;"></div>
<div class="t" style="left:446px;top:684.78px;font-size:12.4px;color:#1e6e42;font-weight:700;">Prop Tensões</div>
<div class="t" style="left:735px;top:684px;width:11px;height:16px;overflow:hidden;font-size:12.6px;color:#444;line-height:normal"><span style="position:absolute;top:0;left:0">Ta</span></div>
<div class="t" style="left:755px;top:684.60px;font-size:12.6px;color:#17744a;font-weight:700;">...</div>
<svg class="r" style="left:778px;top:682px;" width="20" height="20" viewBox="0 0 20 20"><circle cx="9.7" cy="10" r="7.6" fill="none" stroke="#6a6a6a" stroke-width="1.2"/><path d="M9.7 6v8M5.7 10h8" stroke="#555" stroke-width="1.6"/></svg>
<div class="r" style="left:816px;top:687px;width:2px;height:2px;background:#a8a8a8;"></div>
<div class="r" style="left:816px;top:691px;width:2px;height:2px;background:#a8a8a8;"></div>
<div class="r" style="left:816px;top:695px;width:2px;height:2px;background:#a8a8a8;"></div>
<div class="r" style="left:833px;top:685px;width:15px;height:15px;background:#fff;box-sizing:border-box;border:1px solid #ababab"></div>
<svg class="r" style="left:833px;top:685px;" width="15" height="15" viewBox="0 0 15 15"><path d="M9.5 4v7l-4-3.5z" fill="#555"/></svg>
<div class="r" style="left:847px;top:685px;width:330px;height:15px;background:#fff;box-sizing:border-box;border:1px solid #ababab"></div>
<div class="r" style="left:1177px;top:685px;width:147px;height:15px;background:#dadada;"></div>
<div class="r" style="left:1324px;top:685px;width:15px;height:15px;background:#fff;box-sizing:border-box;border:1px solid #ababab"></div>
<svg class="r" style="left:1324px;top:685px;" width="15" height="15" viewBox="0 0 15 15"><path d="M5.5 4v7l4-3.5z" fill="#555"/></svg>
<div class="r" style="left:0px;top:707px;width:1360px;height:21px;background:#f3f3f3;"></div>
<div class="t" style="left:7.6px;top:710.90px;font-size:11.6px;color:#444;font-weight:400;">Pronto</div>
<svg class="r" style="left:55px;top:706px;" width="60" height="22" viewBox="0 0 60 22"><g transform="translate(-55 -706)"><path d="M67 722.5h-4.5v-11h13v6.5" fill="none" stroke="#333" stroke-width="1.1"/><path d="M62.5 713.3h13" stroke="#333" stroke-width="1"/><path d="M64.3 715.5h2.2M64.3 717.3h2.2M64.3 719.2h2.2" stroke="#333" stroke-width="1"/><circle cx="71.5" cy="719.5" r="3.9" fill="#f3f3f3" stroke="#333" stroke-width="1.1"/><circle cx="71.5" cy="719.5" r="1.5" fill="#333"/><circle cx="99.8" cy="712.2" r="1.4" fill="none" stroke="#333" stroke-width="1"/><path d="M97.8 713.8c-1.5-.8-3.3-.2-3.2 1 .1 1 1.8 1.4 3 1.6.3 2 .1 4-.8 6.3-.4 1 .7 1.4 1.2.6l1.4-3.2M101.8 713.8c1.5-.8 3.3-.2 3.2 1-.1 1-1.8 1.4-3 1.6l-.2 1.4" fill="none" stroke="#333" stroke-width="1"/><path d="M101.6 717.3l6 6.2M107.6 717.3l-6 6.2" stroke="#333" stroke-width="1"/></g></svg>
<div class="t" style="left:112.8px;top:710.90px;font-size:11.6px;color:#444;font-weight:400;">Acessibilidade: investigar</div>
<div class="r" style="left:1060px;top:707px;width:40px;height:21px;background:#d4d4d4;"></div>
<svg class="r" style="left:1071px;top:709px;" width="18" height="16" viewBox="0 0 18 16"><path d="M3.5 2.5h11v11h-11zM3.5 6.2h11M3.5 9.8h11M7.2 2.5v11M10.8 2.5v11" fill="none" stroke="#444" stroke-width="1.1"/></svg>
<svg class="r" style="left:1111px;top:709px;" width="18" height="16" viewBox="0 0 18 16"><rect x="2.5" y="2.5" width="13" height="11" fill="none" stroke="#444" stroke-width="1.1"/><rect x="5.5" y="4.5" width="7" height="7" fill="none" stroke="#444" stroke-width="1"/><path d="M7 6.5h4M7 8h4M7 9.5h4" stroke="#444" stroke-width=".9"/></svg>
<svg class="r" style="left:1151px;top:709px;" width="18" height="16" viewBox="0 0 18 16"><path d="M2.5 2.5h13v11h-13zM2.5 8.5h6v-6M12 2.5v4" fill="none" stroke="#444" stroke-width="1.1"/></svg>
<div class="r" style="left:1186px;top:717px;width:8px;height:1px;background:#555;"></div>
<div class="r" style="left:1199px;top:716px;width:100px;height:1px;background:#555;"></div>
<div class="r" style="left:1247px;top:712px;width:5px;height:10px;background:#444;"></div>
<div class="r" style="left:1303px;top:717px;width:9px;height:1px;background:#555;"></div>
<div class="r" style="left:1307px;top:713px;width:1px;height:9px;background:#555;"></div>
<div class="t" style="left:1325px;top:711.26px;font-size:11.2px;color:#444;font-weight:400;">100%</div>
<div class="r" style="left:0px;top:728px;width:1360px;height:40px;background:#070724;"></div>
<svg class="r" style="left:16px;top:739px;" width="18" height="18" viewBox="0 0 18 18"><path d="M1 3.2l6.4-.9v6.2H1zM8.3 2.2L16 1.1v7.4H8.3zM1 9.4h6.4v6.2L1 14.7zM8.3 9.4H16v7.5l-7.7-1.1z" fill="#fff"/></svg>
<svg class="r" style="left:60px;top:736px;" width="24" height="24" viewBox="0 0 24 24"><circle cx="14" cy="9.5" r="6.5" fill="none" stroke="#fff" stroke-width="2"/><path d="M9.3 14.2L3 20.5" stroke="#fff" stroke-width="2.2"/></svg>
<svg class="r" style="left:219px;top:737px;" width="26" height="22" viewBox="0 0 26 22"><path d="M2 3h8l2 2.5h12V20H2z" fill="#e8b53a"/><path d="M2 7.5h22V20H2z" fill="#f8d26a"/><rect x="8" y="12.5" width="10" height="7.5" fill="#3a8be0"/><rect x="10" y="15.5" width="6" height="4.5" fill="#f8d26a"/></svg>
<div class="r" style="left:212px;top:766px;width:40px;height:2px;background:#7fb7e8;"></div>
<svg class="r" style="left:269px;top:736px;" width="24" height="24" viewBox="0 0 24 24"><path d="M12 1.5L2.5 22h19z" fill="none" stroke="#2aa0c8" stroke-width="2.4" stroke-linejoin="round"/><circle cx="12" cy="17.5" r="4.2" fill="#2fc2ea"/></svg>
<svg class="r" style="left:318px;top:736px;" width="24" height="24" viewBox="0 0 24 24"><circle cx="12" cy="11.5" r="10.8" fill="#272526" stroke="#c9c6c9" stroke-width="1.3"/><path d="M12 11.5c-1-3 0-6 3.5-6.5M12 11.5c3 .5 4.5 3.5 3 6.5M12 11.5c-2.5 2-6 1.5-7-1.5" fill="none" stroke="#bdbabd" stroke-width="1.6" stroke-linecap="round"/><circle cx="12" cy="11.5" r="1.6" fill="#272526"/></svg>
<svg class="r" style="left:367px;top:736px;" width="24" height="24" viewBox="0 0 24 24"><rect x="0" y="0" width="24" height="24" fill="#3aa37a"/><path d="M8 5l5-2.5 5 2.5v5l-5 2.5-5-2.5zM3 12l5-2.5 5 2.5v5l-5 2.5-5-2.5zM11 12l5-2.5 5 2.5v5l-5 2.5-5-2.5z" fill="#eaf6ef" stroke="#3aa37a" stroke-width=".8"/><circle cx="20.5" cy="20" r="2.5" fill="#f5a742"/></svg>
<svg class="r" style="left:415px;top:735px;" width="26" height="26" viewBox="0 0 26 26"><circle cx="13" cy="13" r="11.8" fill="#fff"/><circle cx="13" cy="13" r="10.6" fill="#84c13e"/><circle cx="13" cy="13" r="5.6" fill="#fff"/><circle cx="13" cy="13" r="4" fill="#84c13e"/><clipPath id="circ"><circle cx="13" cy="13" r="11.8"/></clipPath><path d="M13 13L15.5 0H26V10z" fill="#fff" clip-path="url(#circ)"/><path d="M16.5 2.2l-.3 4.3M20.2 3.6l-2.2 4M23 7.5l-3.8 2.2" stroke="#e5532d" stroke-width="1.7"/></svg>
<div class="r" style="left:408px;top:766px;width:40px;height:2px;background:#7fb7e8;"></div>
<svg class="r" style="left:464px;top:735px;" width="26" height="26" viewBox="0 0 26 26"><path d="M13 1.5l7.5 6.5a7.5 7.5 0 0 1 -2 10l5 6.5H2.5l5-6.5A7.5 7.5 0 0 1 5.5 8z" fill="#2ed6a6"/><path d="M8.5 11.5h9a4.5 3.5 0 0 1 -9 0z" fill="#0a0a26"/></svg>
<svg class="r" style="left:513px;top:736px;" width="26" height="26" viewBox="0 0 26 26"><circle cx="13" cy="13" r="12" fill="#db4437"/><path d="M13 13L2.6 7A12 12 0 0 0 9 24.3z" fill="#0f9d58"/><path d="M13 13l-4 11.3A12 12 0 0 0 25 13z" fill="#f4c20d"/><path d="M13 13L25 13A12 12 0 0 0 23.4 7H13z" fill="#f4c20d"/><circle cx="13" cy="13" r="5.6" fill="#fff"/><circle cx="13" cy="13" r="4.3" fill="#4285f4"/></svg>
<svg class="r" style="left:562px;top:735px;" width="26" height="26" viewBox="0 0 26 26"><path d="M3 7l19-4 1 4-19 4z" fill="#cfd8e0"/><path d="M4 11h19v12H4z" fill="#2a7fd4"/><path d="M4 15l19-2v4L4 19z" fill="#7fc4f7"/></svg>
<svg class="r" style="left:611px;top:736px;" width="25" height="25" viewBox="0 0 25 25"><rect width="24" height="24" rx="2" fill="#2f5ff5"/><path d="M5.5 4.5h3.5l3 5 3-5h3.5l-4.5 7.5 4.5 7.5h-3.5l-3-5-3 5H5.5l4.5-7.5z" fill="#b9c4ff"/><path d="M9.5 12l2.5-2.5 2.5 2.5-2.5 2.5z" fill="#fff"/></svg>
<svg class="r" style="left:660px;top:736px;" width="25" height="25" viewBox="0 0 25 25"><rect width="24" height="24" fill="#1f6fb2"/><rect x="1" y="1" width="22" height="13" fill="#e9f1f8"/><path d="M4 4h9l-2 6H4z" fill="#2a7fc6"/><text x="6" y="22.5" font-size="7" fill="#fff" font-family="Liberation Sans">2023</text></svg>
<svg class="r" style="left:708px;top:736px;" width="25" height="25" viewBox="0 0 25 25"><path d="M1 2l3-2h20v18H4z" fill="#1a5fd6"/><rect x="3" y="18" width="21" height="6" fill="#0b3fa3"/><text x="8.5" y="15" font-size="13" font-weight="700" fill="#fff" font-family="Liberation Sans">R</text><text x="7.5" y="23" font-size="5" font-weight="700" fill="#fff" font-family="Liberation Sans">RVT</text></svg>
<svg class="r" style="left:757px;top:736px;" width="25" height="25" viewBox="0 0 25 25"><path d="M1 2l3-2h20v18H4z" fill="#1a5fd6"/><rect x="3" y="18" width="21" height="6" fill="#0b3fa3"/><text x="8" y="15" font-size="13" font-weight="700" fill="#fff" font-family="Liberation Sans">A</text><text x="7.5" y="23" font-size="5" font-weight="700" fill="#fff" font-family="Liberation Sans">ADS</text></svg>
<svg class="r" style="left:806px;top:736px;" width="25" height="25" viewBox="0 0 25 25"><rect width="24" height="24" rx="2" fill="#5cb82c"/><path d="M19 5H7L4 8v8l3 3h12v-4H9V9h10z" fill="#d8f3b5"/></svg>
<svg class="r" style="left:856px;top:736px;" width="26" height="25" viewBox="0 0 26 25"><path d="M20 6a9 9 0 1 0 0 13" fill="none" stroke="#aaa" stroke-width="4"/><path d="M12 3a9 9 0 0 1 10 8" fill="none" stroke="#e6452a" stroke-width="4"/><circle cx="12.5" cy="12.5" r="5" fill="#1a1a2e"/><path d="M2 21l5-5" stroke="#999" stroke-width="3"/></svg>
<div class="r" style="left:849px;top:766px;width:40px;height:2px;background:#7fb7e8;"></div>
<svg class="r" style="left:906px;top:736px;" width="24" height="24" viewBox="0 0 24 24"><rect x="1" y="1" width="22" height="22" rx="1.5" fill="#f6c913"/><path d="M12 23l11-11v9a2 2 0 0 1-2 2z" fill="#474747"/></svg>
<svg class="r" style="left:955px;top:736px;" width="26" height="26" viewBox="0 0 26 26"><circle cx="13" cy="13" r="12" fill="#db4437"/><path d="M13 13L2.6 7A12 12 0 0 0 9 24.3z" fill="#0f9d58"/><path d="M13 13l-4 11.3A12 12 0 0 0 25 13z" fill="#f4c20d"/><path d="M13 13L25 13A12 12 0 0 0 23.4 7H13z" fill="#f4c20d"/><circle cx="13" cy="13" r="5.6" fill="#fff"/><circle cx="13" cy="13" r="4.3" fill="#4285f4"/><circle cx="19" cy="19" r="6" fill="#e8e8e8" stroke="#b0b0b0"/></svg>
<div class="r" style="left:947px;top:766px;width:40px;height:2px;background:#7fb7e8;"></div>
<svg class="r" style="left:1004px;top:736px;" width="26" height="26" viewBox="0 0 26 26"><circle cx="13" cy="13" r="12" fill="#db4437"/><path d="M13 13L2.6 7A12 12 0 0 0 9 24.3z" fill="#0f9d58"/><path d="M13 13l-4 11.3A12 12 0 0 0 25 13z" fill="#f4c20d"/><path d="M13 13L25 13A12 12 0 0 0 23.4 7H13z" fill="#f4c20d"/><circle cx="13" cy="13" r="5.6" fill="#fff"/><circle cx="13" cy="13" r="4.3" fill="#4285f4"/><circle cx="19" cy="19" r="6" fill="#1b4fc9"/><circle cx="19" cy="18" r="2.4" fill="#fff"/></svg>
<div class="r" style="left:996px;top:766px;width:40px;height:2px;background:#7fb7e8;"></div>
<div class="r" style="left:1041px;top:728px;width:48px;height:40px;background:#3a3a44;"></div>
<svg class="r" style="left:1052px;top:735px;" width="26" height="26" viewBox="0 0 26 26"><rect x="7" y="2" width="17" height="22" rx="1.5" fill="#21a366"/><rect x="7" y="9" width="17" height="7" fill="#107c41"/><rect x="15" y="2" width="9" height="7" fill="#33c481"/><rect x="15" y="16" width="9" height="8" fill="#185c37" opacity=".6"/><rect x="1" y="6" width="14" height="14" rx="1.5" fill="#107c41"/><path d="M4.5 9l6.5 8M11 9l-6.5 8" stroke="#fff" stroke-width="2"/></svg>
<div class="r" style="left:1041px;top:766px;width:48px;height:2px;background:#7fb7e8;"></div>
<svg class="r" style="left:1204px;top:740px;" width="18" height="14" viewBox="0 0 18 14"><path d="M3 10l6-6 6 6" fill="none" stroke="#fff" stroke-width="1.2"/></svg>
<svg class="r" style="left:1227px;top:740px;" width="20" height="18" viewBox="0 0 20 18"><rect x="3.5" y="2.5" width="15" height="10" fill="none" stroke="#fff" stroke-width="1.1"/><path d="M11 12.5v3M6 15.5h10" stroke="#fff" stroke-width="1.1"/><rect x="1.5" y="1.5" width="5" height="4" fill="#070724" stroke="#fff" stroke-width="1"/></svg>
<div class="t" style="left:1255px;top:733.50px;font-size:11.6px;color:#fff;font-weight:400;">POR</div>
<div class="t" style="left:1254px;top:749.90px;font-size:11.6px;color:#fff;font-weight:400;">PTB2</div>
<div class="t" style="left:1279.50px;width:80px;text-align:center;top:732.40px;font-size:11.6px;color:#fff;font-weight:400;">11:12</div>
<div class="t" style="left:1280.00px;width:80px;text-align:center;top:750.00px;font-size:11.6px;color:#fff;font-weight:400;">15/10/2025</div>
<div class="r" style="left:1355px;top:728px;width:1px;height:40px;background:#555566;"></div>
</body></html>
